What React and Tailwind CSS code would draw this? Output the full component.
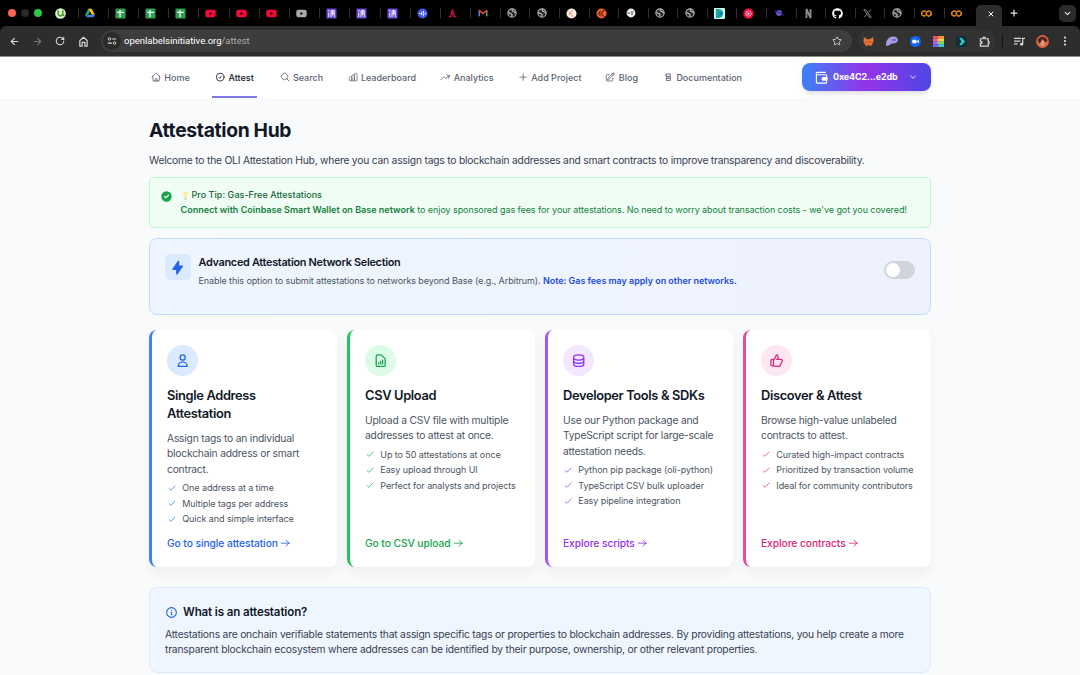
import React from "react";
import {
  HiOutlineUser, HiOutlineDocumentReport, HiOutlineDatabase, HiOutlineThumbUp,
  HiOutlineInformationCircle, HiLightningBolt, HiCheckCircle, HiOutlineChartBar,
  HiOutlineCheck,
} from "react-icons/hi";
import {
  HiOutlineHome, HiOutlineCheckCircle, HiOutlineMagnifyingGlass,
  HiOutlineArrowTrendingUp, HiOutlinePlus, HiOutlinePencilSquare,
} from "react-icons/hi2";
import { FaYoutube, FaGithub } from "react-icons/fa";
import { SiGooglecolab } from "react-icons/si";
import {
  ArrowLeft, ArrowRight, RotateCw, Star, EllipsisVertical, Plus, X, ChevronDown,
} from "lucide-react";

const Svg = ({ children, className = "size-[11px]", box = "0 0 12 12" }) => (
  <svg viewBox={box} className={"shrink-0 " + className}>{children}</svg>
);
const Torrent = () => (
  <Svg><circle cx="6" cy="6" r="5.8" fill="#d9f5c5" /><path d="M3.500 2.500v3.500a2.500 2.500 0 0 0 5 0V2.500M8.500 7l1.500 1.500" stroke="#4a9a2c" strokeWidth="1.700" fill="none" /></Svg>
);
const Drive = () => (
  <Svg className="size-[10px]"><path d="M4 1h4L4 8 2 11 0 8z" fill="#1fa463" /><path d="M4 1h4l4 7H8z" fill="#fbbc04" /><path d="M4 8h8l-2 3H2z" fill="#4285f4" /><path d="M6 4.8 7.8 8H4.2z" fill="#000" /></Svg>
);
const Sheet = () => (
  <Svg><rect x=".5" y=".5" width="11" height="11" rx="1" fill="#2f9e53" /><path d="M2.200 4.800h7.600M5.500 2.200v8" stroke="#e9f7ee" strokeWidth="1.500" /></Svg>
);
const Tube = () => <FaYoutube className="size-[11px] text-[#f5093a]" />;
const TubeGray = () => <FaYoutube className="size-[11px] text-[#aaaaaa]" />;
const Violet = () => (
  <Svg><rect x=".5" y=".5" width="11" height="11" rx="1" fill="#6a48d7" /><path d="M3 10V5M2 3h2M5.500 10V3h3.500v7M7.200 2v6M6 5.500h3" stroke="#fff" strokeWidth="1" fill="none" /></Svg>
);
const BlueDisc = () => (
  <Svg><circle cx="6" cy="6" r="5.5" fill="#4557df" /><path d="M2 6h2M5 4v4M7 3v6M9 5v2" stroke="#dfe3ff" strokeWidth="1.2" /></Svg>
);
const Tree = () => (
  <Svg><path d="M6 1 8 4v3l3 3H7L6 8l-1 2H1l3-3V4z" fill="#b41448" /><path d="M5 5h2M4 8h4" stroke="#4d0a25" /></Svg>
);
const Gmail = () => (
  <Svg className="size-[10px]"><path d="M1.500 10V3" stroke="#4285f4" strokeWidth="2" /><path d="M10.500 10V3" stroke="#34a853" strokeWidth="2" /><path d="M1 2.500 6 6.500l5-4" stroke="#ea4335" strokeWidth="2" fill="none" /></Svg>
);
const Globe = () => (
  <Svg className="size-[10px]"><circle cx="6" cy="6" r="5" fill="#26282a" stroke="#b7b9bc" strokeWidth="1.3" /><path d="M1.500 5.500c2 0 2 1.500 3.500 1.500s1 2 .5 3.500M7 1.500c-1 1.500-1 2.500.5 2.500S9 6 11 6" stroke="#b7b9bc" strokeWidth="1.500" fill="none" /></Svg>
);
const PaleDisc = () => (
  <Svg><circle cx="6" cy="6" r="5.5" fill="#fff1e8" /><path d="M8 2 5 5.500 8 10M4 4v4" stroke="#e98b5f" strokeWidth="1" fill="none" /></Svg>
);
const OrangeDisc = () => (
  <Svg><circle cx="6" cy="6" r="5.5" fill="#ef6331" /><path d="M9 2 5.500 6 9 10M5 3 3 6l2 3" stroke="#60200c" strokeWidth="1.300" fill="none" /></Svg>
);
const WhiteDisc = () => (
  <Svg className="size-[10px]"><circle cx="6" cy="6" r="5.3" fill="#f1f1f1" /><path d="M2 6h3M6 5h3M6 7.500h2.500" stroke="#333" strokeWidth="1.100" /></Svg>
);
const PlayTile = () => (
  <Svg><rect width="12" height="12" rx="1" fill="#d8fff6" /><path d="M2 1h3c7 1 7 9 0 10H2z" fill="#16a99a" /><path d="M6 3.500 9 6 6 8.500z" fill="#2866cf" /></Svg>
);
const RedPlay = () => (
  <Svg><circle cx="6" cy="6" r="5.6" fill="#f4093c" /><circle cx="6" cy="6" r="2.900" fill="none" stroke="#fff" strokeWidth=".7" /><path d="M5 4.500 7.500 6 5 7.500z" fill="#fff" /></Svg>
);
const Planet = () => (
  <Svg className="size-[10px]"><circle cx="6" cy="6" r="3.500" fill="#6657c6" /><path d="M1 4c3 0 8 2 10 5" stroke="#43339b" strokeWidth="1.500" fill="none" /></Svg>
);
const Flix = () => (
  <Svg><path d="M3.800 11V1l4.400 10V1" stroke="#8d8d8d" strokeWidth="2" fill="none" /></Svg>
);
const Hub = () => <FaGithub className="size-[11px] text-white" />;
const Ex = () => (
  <Svg className="size-[9px]"><path d="M1 1h2.500L11 11H8.500zM10.500 1 7 5M5 7l-3.500 4" stroke="#aaa" fill="none" /></Svg>
);
const Colab = () => <SiGooglecolab className="size-[11px] text-[#e88a12]" />;

const TABS = [
  Torrent, Drive, Sheet, Sheet, Sheet, Tube, Tube, Tube, TubeGray, Violet, Violet, Violet, BlueDisc,
  Tree, Gmail, Globe, Globe, PaleDisc, OrangeDisc, WhiteDisc, Globe, Globe, PlayTile, RedPlay, Planet,
  Flix, Hub, Ex, Globe, Colab, Colab,
];

function TabStrip() {
  return (
    <div className="flex h-[26px] bg-black">
      <div className="flex w-[48.500px] shrink-0 items-center gap-[5px] pl-[8px]">
        <i className="size-[8px] rounded-full bg-[#fe6157]" />
        <i className="size-[8px] rounded-full bg-[#282828]" />
        <i className="size-[8px] rounded-full bg-[#2ac845]" />
      </div>
      {TABS.map((Icon, i) => (
        <div key={i} className={"flex shrink-0 items-center justify-between " + (i < 14 ? "w-[30.200px]" : "w-[29.600px]")}>
          <span className="flex w-[23px] items-center justify-center"><Icon /></span>
          <i className={i === 30 ? "hidden" : "h-[10px] w-px bg-[#303030]"} />
        </div>
      ))}
      <div className="mt-[5px] ml-[1.500px] flex w-[26px] items-center justify-end rounded-t-[5px] bg-[#2d2d2d] pr-[7px] pb-[4px]">
        <X className="size-[8px] text-white" strokeWidth={3} />
      </div>
      <div className="flex flex-1 items-center justify-between pr-[4px] pl-[7px]">
        <Plus className="size-[10px] text-[#e6e6e6]" strokeWidth={3} />
        <span className="flex size-[17px] items-center justify-center rounded-[5px] bg-[#2b2b2b]">
          <ChevronDown className="size-[9px] text-[#e6e6e6]" strokeWidth={3} />
        </span>
      </div>
    </div>
  );
}

function Toolbar() {
  return (
    <div className="bg-black">
      <div className="flex h-[30px] items-center rounded-t-[6px] bg-[#2d2d2d]">
        <div className="flex w-[101px] shrink-0 items-center pl-[9px]">
          <ArrowLeft className="size-[11px] text-[#d8d8d8]" strokeWidth={2.400} />
          <ArrowRight className="ml-[12px] size-[11px] text-[#777]" strokeWidth={2.400} />
          <RotateCw className="ml-[12px] size-[10px] text-[#d8d8d8]" strokeWidth={2.600} />
          <Svg className="ml-[13px] size-[11px]"><path d="M2 11V5l4-3.500L10 5v6H7.500V7h-3v4z" fill="none" stroke="#d8d8d8" strokeWidth="1.300" /></Svg>
        </div>
        <div className="flex h-[22px] w-[751px] shrink-0 items-center rounded-full bg-[#3d3d3d] pr-[10px] pl-[2px]">
          <span className="flex size-[18px] items-center justify-center rounded-full bg-[#2b2b2b]">
            <Svg className="size-[10px]"><path d="M6 3.500h5M1 8.500h5" stroke="#d8d8d8" strokeWidth="1.300" /><circle cx="3" cy="3.500" r="1.500" fill="none" stroke="#d8d8d8" strokeWidth="1.200" /><circle cx="9" cy="8.500" r="1.500" fill="none" stroke="#d8d8d8" strokeWidth="1.200" /></Svg>
          </span>
          <span className="ml-[3px] font-[Roboto,sans-serif] text-[9.500px] tracking-[-0.020px] text-white">
            openlabelsinitiative.org<span className="text-[#aaa]">/attest</span>
          </span>
          <Star className="ml-auto size-[10px] text-[#c8c8c8]" strokeWidth={2.400} />
        </div>
        <div className="ml-[6px] flex h-[22px] w-[138px] shrink-0 items-center justify-between rounded-full bg-[#333] pr-[6px] pl-[5px]">
          <Svg><path d="m1 1 3.500 2.500h3L11 1l.5 5L9 10.500H3L.5 6z" fill="#ec7232" /><path d="M3.500 6.500h1.500M7 6.500h1.500M5 10h2" stroke="#6e2c16" /></Svg>
          <Svg className="size-[12px]"><path d="M0 10C0 5 3 1.500 7 1.500c5 0 6 4 3.500 6C8 9 6 8 5 9s-5 3-5 1" fill="#a99be8" /><path d="M7 4v2M9 4v2" stroke="#4a3e82" /></Svg>
          <Svg><circle cx="6" cy="6" r="6" fill="#1467ea" /><rect x="2.500" y="4" width="4.500" height="4" rx="1" fill="#fff" /><path d="M7 6l2.500-2v4z" fill="#fff" /></Svg>
          <Svg>
            <path d="M0 0h12v3H0z" fill="#ef5353" /><path d="M6 0h6v3H6z" fill="#f79a3b" />
            <path d="M0 3h12v3H0z" fill="#e35bb4" /><path d="M5 3h7v3H5z" fill="#f5d644" />
            <path d="M0 6h12v3H0z" fill="#b95be8" /><path d="M5 6h7v3H5z" fill="#83d95a" />
            <path d="M0 9h12v3H0z" fill="#6f66ee" /><path d="M6 9h6v3H6z" fill="#3ec6c9" />
          </Svg>
          <Svg><rect width="12" height="12" rx="3" fill="#102d36" /><path d="M3.500 2H6l4 4-4 4H3.500L6 6z" fill="#20cfe0" /></Svg>
          <Svg><path d="M1.500 3H4.500V1.500h2V3H10v3h1v2h-1v3H1.500V8H3V6H1.500z" fill="none" stroke="#d8d8d8" strokeWidth="1.300" /></Svg>
        </div>
        <i className="ml-[6px] h-[12px] w-px bg-[#111]" />
        <Svg className="ml-[11px] size-[11px]"><path d="M0 2.500h8M0 5.500h7M0 8.500h4M9.500 9V2.500H12" fill="none" stroke="#d8d8d8" strokeWidth="1.300" /><circle cx="8.300" cy="9" r="1.600" fill="#d8d8d8" /></Svg>
        <Svg className="ml-[11px] size-[13px]"><circle cx="6" cy="6" r="5.900" fill="#db6840" /><path d="M1.500 5c1-4 7-5 9 0L9 7 6 4 3.500 8z" fill="#542321" /><path d="M5 5l2.500.5L8 9l-2.500 1.500L4 8z" fill="#d79b80" /></Svg>
        <EllipsisVertical className="ml-[10px] size-[12px] text-[#d8d8d8]" strokeWidth={2.500} />
      </div>
    </div>
  );
}

const DocIcon = ({ className }) => (
  <svg viewBox="0 0 12 12" className={className}><path d="M3 4.500V3M4 2.200h4.500V10H4zM4 5h4.500M6.200 5v2.500M4 7.500h4.500" fill="none" stroke="currentColor" strokeWidth="1" /></svg>
);

const NAV = [
  { label: "Home", icon: HiOutlineHome, cls: "w-[64.300px]" },
  { label: "Attest", icon: HiOutlineCheckCircle, cls: "w-[64.300px]", active: true },
  { label: "Search", icon: HiOutlineMagnifyingGlass, cls: "w-[68px]" },
  { label: "Leaderboard", icon: HiOutlineChartBar, cls: "w-[92.800px]", bars: true },
  { label: "Analytics", icon: HiOutlineArrowTrendingUp, cls: "w-[77.600px]" },
  { label: "Add Project", icon: HiOutlinePlus, cls: "w-[87.500px]" },
  { label: "Blog", icon: HiOutlinePencilSquare, cls: "w-[57.600px]" },
  { label: "Documentation", icon: DocIcon, cls: "w-[90px]" },
];

function Header() {
  return (
    <header className="flex h-[42px] border-t border-[#8b8b8b] bg-white pl-[151px]">
      {NAV.map(({ label, icon: Icon, cls, active, bars }) => (
        <div key={label} className={"flex shrink-0 " + cls}>
          <div className={"relative flex h-[41px] items-center gap-[3px] text-[9px] font-medium whitespace-nowrap " + (active ? "text-[#111827]" : "text-[#5b6472]")}>
            <Icon className={"size-[10.300px] " + (bars ? "[&_path]:stroke-[1.700]" : "")} strokeWidth={1.900} />
            <span>{label}</span>
            {active && <i className="absolute -right-[3px] -left-[3px] bottom-0 h-[2px] bg-[#7f77e3]" />}
          </div>
        </div>
      ))}
      <button className="mt-[6px] ml-[48.900px] flex h-[28px] w-[129px] shrink-0 items-center rounded-[8px] bg-[linear-gradient(90deg,#3b82f6,#9333ea_50%,#4f46e5)] pl-[13px] text-white shadow-md">
        <Svg className="size-[13px]" box="0 0 14 14"><path d="M1.500 3v9a1 1 0 0 0 1 1h9a1 1 0 0 0 1-1V5a1 1 0 0 0-1-1h-9a1 1 0 0 1 0-2.500h9" fill="none" stroke="#fff" strokeWidth="1.200" /><path d="M9 6.500h4.500v4H9a2 2 0 0 1 0-4z" fill="#fff" /></Svg>
        <span className="ml-[5px] text-[9px] tracking-[-0.130px] font-bold">0xe4C2...e2db</span>
        <ChevronDown className="ml-[10px] size-[10px]" strokeWidth={2} />
      </button>
    </header>
  );
}

const CARDS = [
  {
    title: "Single Address Attestation", titleClass: "w-[110px]", icon: HiOutlineUser,
    text: ["Assign tags to an individual", "blockchain address or smart", "contract."],
    items: ["One address at a time", "Multiple tags per address", "Quick and simple interface"],
    link: "Go to single attestation", border: "border-[#3b82f6]", disc: "bg-[#dbeafe]", color: "text-[#2563eb]", check: "text-[#3b82f6]",
  },
  {
    title: "CSV Upload", titleClass: "", icon: HiOutlineDocumentReport,
    text: ["Upload a CSV file with multiple", "addresses to attest at once."],
    items: ["Up to 50 attestations at once", "Easy upload through UI", "Perfect for analysts and projects"],
    link: "Go to CSV upload", border: "border-[#22c55e]", disc: "bg-[#dcfce7]", color: "text-[#16a34a]", check: "text-[#22c55e]",
  },
  {
    title: "Developer Tools & SDKs", titleClass: "", icon: HiOutlineDatabase,
    text: ["Use our Python package and", "TypeScript script for large-scale", "attestation needs."],
    items: ["Python pip package (oli-python)", "TypeScript CSV bulk uploader", "Easy pipeline integration"],
    link: "Explore scripts", border: "border-[#a855f7]", disc: "bg-[#f3e8ff]", color: "text-[#9333ea]", check: "text-[#a855f7]",
  },
  {
    title: "Discover & Attest", titleClass: "", icon: HiOutlineThumbUp,
    text: ["Browse high-value unlabeled", "contracts to attest."],
    items: ["Curated high-impact contracts", "Prioritized by transaction volume", "Ideal for community contributors"],
    link: "Explore contracts", border: "border-[#ec4899]", disc: "bg-[#fce7f3]", color: "text-[#db2777]", check: "text-[#ec4899]",
  },
];

function Card({ title, titleClass, icon: Icon, text, items, link, border, disc, color, check }) {
  return (
    <article className={"flex h-[236.500px] flex-col rounded-[8px] border-l-[3px] bg-white pt-[15px] pb-[15.500px] pl-[15px] shadow-[0_6px_12px_rgba(0,0,0,0.05)] " + border}>
      <span className={"flex size-[31px] shrink-0 items-center justify-center rounded-full " + disc + " " + color}>
        <Icon className="size-[15.400px]" />
      </span>
      <h3 className={"mt-[10.500px] text-[12.860px] leading-[18px] font-semibold tracking-[-0.350px] text-[#111827] " + titleClass}>{title}</h3>
      <p className="mt-[8px] text-[10.280px] leading-[15.430px] tracking-[-0.200px] whitespace-nowrap text-[#4b5563]">
        {text.map((t) => <span key={t} className="block">{t}</span>)}
      </p>
      <ul className="mt-[3px] text-[9px] leading-[15.430px] tracking-[-0.080px] text-[#4b5563]">
        {items.map((t) => (
          <li key={t} className="flex items-center whitespace-nowrap">
            <HiOutlineCheck className={"mr-[5px] size-[10.300px] " + check} />{t}
          </li>
        ))}
      </ul>
      <a className={"mt-auto flex items-center text-[10.280px] leading-[16px] font-medium tracking-[-0.080px] " + color}>
        {link}
        <svg viewBox="0 0 24 24" className="ml-[2.500px] size-[10.300px]" fill="none" stroke="currentColor" strokeWidth="2" strokeLinecap="round" strokeLinejoin="round"><path d="M14 5l7 7m0 0l-7 7m7-7H3" /></svg>
      </a>
    </article>
  );
}

export default function App() {
  return (
    <div className="h-[675px] w-[1080px] overflow-hidden bg-[#f9fafb] font-[Inter,sans-serif]">
      <TabStrip />
      <Toolbar />
      <Header />
      <main className="ml-[149px] w-[782px]">
        <h1 className="pt-[19px] text-[19.300px] leading-[26px] font-bold tracking-[-0.320px] text-[#111827]">Attestation Hub</h1>
        <p className="mt-[9.500px] text-[10.280px] leading-[15.400px] tracking-[-0.205px] whitespace-nowrap text-[#374151]">
          Welcome to the OLI Attestation Hub, where you can assign tags to blockchain addresses and smart contracts to improve transparency and discoverability.
        </p>

        <section className="mt-[9.500px] flex h-[51px] rounded-[5px] border border-[#bbf7d0] bg-[#f0fdf4] pt-[9px] pl-[10px]">
          <HiCheckCircle className="mt-[3px] size-[13px] shrink-0 text-[#16a34a]" />
          <div className="ml-[7.500px] text-[9px] leading-[15.400px] whitespace-nowrap">
            <h2 className="flex items-center font-medium text-[#166534]">
              <Svg className="mr-[2px] size-[9px]"><path d="M6 .5a3.500 3.500 0 0 0-2 6.300V9h4V6.800A3.500 3.500 0 0 0 6 .5z" fill="#fde9a9" /><path d="M4.500 10h3M5 11.300h2" stroke="#b5b9ad" /></Svg>
              <span className="tracking-[0.040px]">Pro Tip: Gas-Free Attestations</span>
            </h2>
            <p className="-mt-[0.500px] tracking-[-0.070px] text-[#15803d]"><b className="font-semibold tracking-[0.010px]">Connect with Coinbase Smart Wallet on Base network</b> to enjoy sponsored gas fees for your attestations. No need to worry about transaction costs - we've got you covered!</p>
          </div>
        </section>

        <section className="mt-[10px] flex h-[77px] rounded-[8px] border border-[#bfdbfe] bg-[linear-gradient(90deg,#eff6ff,#eef2ff)] pt-[15px] pr-[15px] pl-[15px]">
          <span className="flex size-[26px] shrink-0 items-center justify-center rounded-[5px] bg-[#dbeafe]">
            <HiLightningBolt className="size-[15.400px] text-[#2563eb]" />
          </span>
          <div className="ml-[7.500px] whitespace-nowrap">
            <h2 className="text-[10.900px] leading-[16px] font-semibold tracking-[-0.300px] text-[#111827]">Advanced Attestation Network Selection</h2>
            <p className="mt-[4px] text-[9px] leading-[14px] tracking-[-0.090px] text-[#4b5563]">Enable this option to submit attestations to networks beyond Base (e.g., Arbitrum). <b className="font-semibold tracking-[-0.040px] text-[#1d4ed8]">Note: Gas fees may apply on other networks.</b></p>
          </div>
          <span className="mt-[7px] ml-auto flex h-[18px] w-[31px] items-center rounded-full bg-[#d1d5db] pl-[2px]">
            <i className="size-[14px] rounded-full bg-white" />
          </span>
        </section>

        <section className="mt-[15px] grid grid-cols-4 gap-[10px]">
          {CARDS.map((c) => <Card key={c.title} {...c} />)}
        </section>

        <section className="mt-[20.500px] h-[86px] rounded-[8px] border border-[#dbeafe] bg-[#eff6ff] pt-[15px] pl-[15px]">
          <h2 className="flex items-center gap-[5px] text-[11.570px] leading-[18px] font-semibold tracking-[-0.130px] text-[#111827]">
            <HiOutlineInformationCircle className="size-[13px] text-[#2563eb]" />
            What is an attestation?
          </h2>
          <p className="mt-[5.500px] text-[10.280px] leading-[15.430px] tracking-[-0.200px] whitespace-nowrap text-[#374151]">
            Attestations are onchain verifiable statements that assign specific tags or properties to blockchain addresses. By providing attestations, you help create a more<br />
            transparent blockchain ecosystem where addresses can be identified by their purpose, ownership, or other relevant properties.
          </p>
        </section>
      </main>
    </div>
  );
}
